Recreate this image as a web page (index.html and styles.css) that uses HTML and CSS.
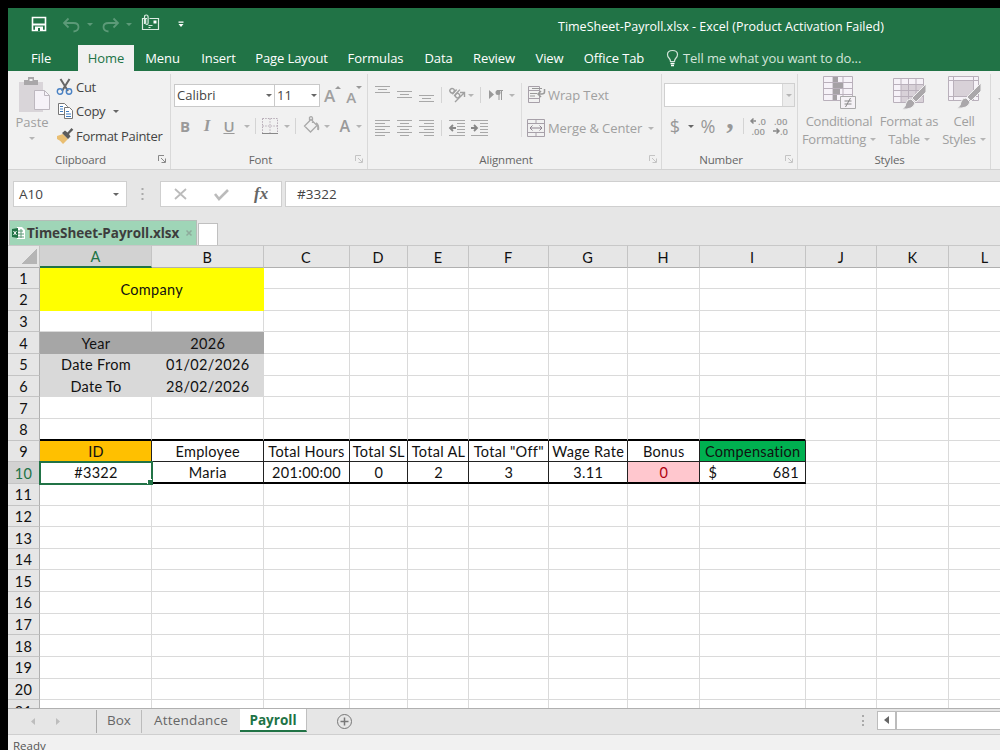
FILE: index.html
```html
<!DOCTYPE html>
<html lang="en">
<head>
<meta charset="utf-8">
<title>TimeSheet-Payroll.xlsx - Excel</title>
<link rel="stylesheet" href="styles.css">
</head>
<body>
<div class="window">
  <header class="titlebar">
    <div class="quick">
      <svg width="190" height="36" fill="none">
        <path d="M24.500 9.500h13v13h-13z" stroke="#fff" stroke-width="1.600"/><path d="M24 16.500h14" stroke="#fff" stroke-width="2"/><path d="M27 18.500h8v4h-8z" fill="#fff"/><path d="M30 20h2v3h-2z" fill="#217346"/>
        <g stroke="#5c9a78" stroke-width="1.800"><path d="M60.500 10.500l-4.500 4.500 4.500 4.500M56.500 15h9q5 0 5 4t-5 4.500"/><path d="M105.500 10.500l4.500 4.500-4.500 4.500M109.500 15h-9q-5 0-5 4t5 4.500"/></g>
        <path d="M79 15h6l-3 3zM118 15h6l-3 3z" fill="#5c9a78"/>
        <g stroke="#dcebe2" stroke-width="1.200"><path d="M139 10.500h-4.500v11h16v-11h-9"/><path d="M136.500 16v-7q0-2 1.800-2t1.800 2v6q0 1.500-1.200 1.500t-1.200-1.500v-5"/><path d="M140.500 17.500h4M140.500 19.500h2"/></g><path d="M145.500 12.500h3v3h-3z" fill="#fff"/>
        <path d="M170.500 13.500h5v1.200h-5zM170.500 16h5l-2.500 3z" fill="#fff"/>
      </svg>
    </div>
    <div class="title">TimeSheet-Payroll.xlsx - Excel (Product Activation Failed)</div>
  </header>
  <nav class="menu">
    <span class="file">File</span><span class="active">Home</span><span>Menu</span><span>Insert</span><span>Page Layout</span><span>Formulas</span><span>Data</span><span>Review</span><span>View</span><span>Office Tab</span>
    <svg width="30" height="26" fill="none" stroke="#d3e5da" stroke-width="1.200"><path d="M16.500 16.500q0-2-1.500-3.500t-1.500-3.500q0-4 5-4t5 4q0 2-1.500 3.500t-1.500 3.500z"/><path d="M16.500 18.500h4M17 20.500h3" stroke="#fff" stroke-width="1.600"/></svg>
    <span class="tell">Tell me what you want to do...</span>
  </nav>

  <section class="ribbon">
    <div class="group clipboard">
      <div class="body">
        <div class="paste">
          <svg width="34" height="38" fill="none"><path d="M4 8h24v30H4z" fill="#d9d5d9"/><path d="M9 6h4V3h6v3h4v5H9z" fill="#a9a7a9"/><path d="M14.500 5h3v2h-3z" fill="#f0f0f0"/><path d="M19.500 16.500h10l5 5v14h-15z" fill="#f6f2f8" stroke="#bdb7bf"/><path d="M29.500 16.500v5h5" stroke="#bdb7bf"/></svg>
          <span class="off">Paste</span><i class="caret"></i>
        </div>
        <div class="clips">
          <div><svg width="20" height="20" fill="none"><path d="M4.500 2l7.500 12M13.500 2L6 14" stroke="#666" stroke-width="2"/><circle cx="4" cy="14.500" r="2.700" stroke="#4a82c4" stroke-width="1.400"/><circle cx="13" cy="14.500" r="2.700" stroke="#4a82c4" stroke-width="1.400"/></svg>Cut</div>
          <div><svg width="20" height="20" fill="none"><g fill="#fff" stroke="#777"><path d="M2.500 2.500h6l3 3v8h-9z"/><path d="M8.500 6.500h5l3 3v8h-8z"/></g><path d="M4 5.500h3M4 8h3M4 10.500h3M10 10.500h3M10 13h5M10 15.500h5" stroke="#3c7abf"/></svg>Copy<i class="caret dark"></i></div>
          <div><svg width="20" height="20"><path d="M1 10l6-2 5 5-5 5q-3-4-6-5z" fill="#e9be72"/><path d="M6 7l3-2.500 2.500 2L15.500 2l1.800 1.800L13 8l1.500 2.500-2.500 2.500z" fill="#5c5c5c"/></svg>Format Painter</div>
        </div>
      </div>
      <footer><span>Clipboard</span><svg class="launch dark" width="8" height="8"><path d="M.5 6V.5H6M3 3l4 4M7.500 3.500v4h-4"/></svg></footer>
    </div>

    <div class="group font">
      <div class="body col">
        <div class="tools upper">
          <div class="combo name">Calibri<i class="caret dark"></i></div><div class="combo size">11<i class="caret dark"></i></div>
          <span class="grow">A</span><svg width="8" height="20"><path d="M0 4l3-3 3 3z" fill="#999"/></svg><span class="grow small">A</span><svg width="8" height="20"><path d="M0 1h6l-3 3z" fill="#999"/></svg>
        </div>
        <div class="tools lower">
          <b class="t22">B</b><em class="t22">I</em><u class="t22">U</u><i class="caret c10"></i><i class="sep"></i>
          <svg width="23" height="24" fill="none" stroke="#b6abb6"><path d="M3.500 4.500h15v15M3.500 4.500v15M11 4.500v15M3.500 12h15" stroke-dasharray="1.500 1.200"/><path d="M3 19.500h16" stroke="#888"/></svg><i class="caret c10"></i><i class="sep"></i>
          <svg width="23" height="24" fill="none" stroke="#aaa" stroke-width="1.300"><path d="M12 5.500l6 6-6.500 6.500-6-6zM10.500 8V3.500q2-2 3 .5v5"/><path d="M17 9q3 2 2 7" stroke-width="2"/></svg><i class="caret c10"></i><span class="acolor">A</span><i class="caret c10"></i>
        </div>
      </div>
      <footer><span>Font</span><svg class="launch" width="8" height="8"><path d="M.5 6V.5H6M3 3l4 4M7.500 3.500v4h-4"/></svg></footer>
    </div>

    <div class="group align">
      <div class="body">
        <div class="aligns">
          <div class="tools">
            <svg width="70" height="24" fill="none" stroke="#a8a8a8"><path d="M7 3.500h15M10 6.500h9M7 9.500h15M29 8.500h15M32 11.500h9M29 14.500h15M51 12.500h15M54 15.500h9M51 18.500h15"/></svg><i class="sep"></i>
            <svg width="23" height="24" fill="none" stroke="#a0a0a0" stroke-width="1.400"><g transform="rotate(42 10 9)"><circle cx="7" cy="10" r="2.200"/><path d="M9.500 6v6.500"/><path d="M12 4v8.500"/><circle cx="14.300" cy="10" r="2.200"/></g><path d="M10 19l9-9M15 9.500h4.500V14"/></svg><i class="caret"></i><i class="sep wide"></i>
            <svg width="23" height="24"><path d="M5 7l5 4.500-5 4.500z" fill="#999"/><path d="M15 7v10M17.500 7v10M13 7.500h6" stroke="#999" fill="none"/><circle cx="14" cy="9.500" r="2.500" fill="#999"/></svg><i class="caret c10"></i>
          </div>
          <div class="tools second">
            <svg width="70" height="24" fill="none" stroke="#a8a8a8"><path d="M7 4.500h15M7 7.500h10M7 10.500h15M7 13.500h10M7 16.500h15M7 19.500h10M29 4.500h15M32 7.500h9M29 10.500h15M32 13.500h9M29 16.500h15M32 19.500h9M51 4.500h15M56 7.500h10M51 10.500h15M56 13.500h10M51 16.500h15M56 19.500h10"/></svg><i class="sep"></i>
            <svg width="46" height="24" fill="none" stroke="#a8a8a8"><path d="M4 4.500h16M12 7.500h8M12 10.500h8M12 13.500h8M12 16.500h8M4 19.500h16M26 4.500h17M35 7.500h8M35 10.500h8M35 13.500h8M35 16.500h8M26 19.500h17"/><path d="M11 12H5m3-3l-3 3 3 3M26 12h6m-3-3l3 3-3 3" stroke="#888" stroke-width="1.800"/></svg>
          </div>
        </div>
        <div class="wraps">
          <div class="off"><svg width="21" height="22" fill="none" stroke="#a7a0a9"><path d="M1.500 2.500h11v16h-11zM1.500 6.500h11M1.500 14.500h11"/><path d="M3 9.500h7M3 12h5M5 4.500h10" stroke="#999"/><path d="M17.500 5v3q0 2-3 2h-3m2.500-3l-3 3 3 3" stroke="#999" stroke-width="1.500"/></svg>Wrap Text</div>
          <div class="off"><svg width="21" height="22" fill="none" stroke="#a7a0a9"><path d="M.5 2.500h17v17H.5zM.5 6.500h17M.5 15.500h17M9 2.500v4M9 15.500v4"/><path d="M3 11h12M5.500 8.500L3 11l2.500 2.500M12.500 8.500L15 11l-2.500 2.500" stroke="#8e8490"/></svg><span class="merge">Merge &amp; Center</span><i class="caret"></i></div>
        </div>
      </div>
      <footer><span>Alignment</span><svg class="launch" width="8" height="8"><path d="M.5 6V.5H6M3 3l4 4M7.500 3.500v4h-4"/></svg></footer>
    </div>

    <div class="group number">
      <div class="body col">
        <div class="format"><span><i class="caret"></i></span></div>
        <div class="tools">
          <span class="sym w24">$</span><i class="caret c10 dark"></i><span class="sym pct">%</span><span class="comma">,</span><i class="sep"></i>
          <svg width="47" height="24" class="dec"><path d="M9 7H4m2.500-2.500L4 7l2.500 2.500M26 17h6m-2.500-2.500L32 17l-2.500 2.500" fill="none" stroke="#888" stroke-width="1.500"/><text x="11" y="10.500">.0</text><text x="4.500" y="20.500">.00</text><text x="27" y="10.500">.00</text><text x="33" y="20.500">.0</text></svg>
        </div>
      </div>
      <footer><span>Number</span><svg class="launch" width="8" height="8"><path d="M.5 6V.5H6M3 3l4 4M7.500 3.500v4h-4"/></svg></footer>
    </div>

    <div class="group styles">
      <div class="body">
        <div class="style off"><svg width="34" height="37" fill="none" stroke="#b9b0bb"><path d="M1.500 2.500h29v24h-29z" fill="#f6f2f8"/><path d="M1.500 8.500h29M1.500 14.500h29M1.500 20.500h29M11 2.500v24M21 2.500v24"/><path d="M11 3h5v5h-5zM11 9h10v5H11zM11 15h7v5h-7zM11 21h4v5h-4z" fill="#a5a1a5" stroke="none"/><path d="M18.500 22.500h15v12h-15z" fill="#f5f2f6" stroke="#aaa"/><path d="M22.500 27h7M22.500 30h7M28.500 24l-5 9" stroke="#888"/></svg><span>Conditional</span><span>Formatting<i class="caret"></i></span></div>
        <div class="style off"><svg width="34" height="37" fill="none" stroke="#b9b0bb"><path d="M1.500 4.500h30v24h-30z" fill="#f6f2f8"/><path d="M9 11h22v17H9z" fill="#d8d1d8" stroke="none"/><path d="M1.500 10.500h30M1.500 16.500h30M1.500 22.500h30M9 4.500v24M16.500 4.500v24M24 4.500v24"/><path d="M34 10v8l-10 10-4-4zM19 25l4 4q-2 7-13 6 4-2 4-6 1-4 5-4z" fill="#aaa7aa" stroke="#f0f0f0"/></svg><span>Format as</span><span>Table<i class="caret"></i></span></div>
        <div class="style off"><svg width="34" height="37" fill="none" stroke="#b9b0bb"><path d="M1.500 2.500h30v24h-30z" fill="#f6f2f8"/><path d="M7 7h19v15H7z" fill="#d8d1d8" stroke="none"/><path d="M1.500 6.500h30M1.500 22.500h30M6.500 2.500v24M26.500 2.500v24"/><path d="M34 9v8L24 27l-4-4zM19 24l4 4q-2 7-13 6 4-2 4-6 1-4 5-4z" fill="#aaa7aa" stroke="#f0f0f0"/></svg><span>Cell</span><span>Styles<i class="caret"></i></span></div>
      </div>
      <footer><span>Styles</span></footer>
    </div>
    <div class="more"><i class="caret"></i></div>
  </section>

  <section class="formula">
    <div class="namebox">A10<i class="caret dark"></i></div>
    <svg width="34" height="26" fill="#aaa"><path d="M14.500 7h2v2h-2zM14.500 12h2v2h-2zM14.500 17h2v2h-2z"/></svg>
    <div class="actions"><svg width="80" height="24" fill="none" stroke="#bbb"><path d="M14 7l11 10M25 7L14 17" stroke-width="1.800"/><path d="M54 12l4 5 9-9" stroke-width="2.600"/></svg><span>fx</span></div>
    <div class="input">#3322</div>
  </section>

  <section class="files">
    <div class="filetab"><svg width="17" height="16"><path d="M7 2h5l3 3v9H7z" fill="#fff"/><path d="M8 6h5M8 9h6M8 12h6M11 4v9" stroke="#5c9a78" fill="none"/><path d="M2 4l6-1v10l-6-1z" fill="#217346"/><path d="M3.500 6l3 4M6.500 6l-3 4" stroke="#fff"/></svg><b>TimeSheet-Payroll.xlsx</b><svg width="8" height="8" stroke="#8eaa9b" stroke-width="1.500"><path d="M1.500 1.500l5 5M6.500 1.500l-5 5"/></svg></div>
    <div class="newfile"></div>
  </section>

  <main class="sheet" id="sheet"></main>

  <section class="tabs">
    <svg width="88" height="26" fill="#bdbdbd"><path d="M27 9v7l-4-3.500zM48 9v7l4-3.500z"/></svg>
    <span class="box">Box</span><span class="att">Attendance</span><span class="pay">Payroll</span>
    <svg class="add" width="18" height="18" fill="none" stroke="#777"><circle cx="8.500" cy="8.500" r="7"/><path d="M4.500 8.500h8M8.500 4.500v8" stroke-width="1.500"/></svg>
    <svg class="grip" width="6" height="18" fill="#aaa"><path d="M2 3h2v2H2zM2 8h2v2H2zM2 12h2v2H2z"/></svg>
    <div class="scroll"><span></span></div>
  </section>
  <footer class="status">Ready</footer>
</div>
<script src="script.js"></script>
</body>
</html>
```
FILE: script.js
```js
const cells = {
  A1: ["Company", "company"],
  A4: ["Year", "dark"], B4: ["2026", "dark"],
  A5: ["Date From", "light"], B5: ["01/02/2026", "light"],
  A6: ["Date To", "light"], B6: ["28/02/2026", "light"],
  A9: ["ID", "orange"], B9: ["Employee"], C9: ["Total Hours"], D9: ["Total SL"], E9: ["Total AL"],
  F9: ['Total "Off"'], G9: ["Wage Rate"], H9: ["Bonus"], I9: ["Compensation", "green"],
  A10: ["#3322", "selected"], B10: ["Maria"], C10: ["201:00:00"], D10: ["0"], E10: ["2"],
  F10: ["3"], G10: ["3.11"], H10: ["0", "bad"], I10: ["$", "money"]
};
const columns = "ABCDEFGHIJKL";
const sheet = document.getElementById("sheet");

function add(className, text) {
  const el = document.createElement("div");
  el.className = className;
  const label = document.createElement("span");
  label.textContent = text;
  el.append(label);
  sheet.append(el);
  return el;
}

add("head corner", "");
for (const c of columns) add("head" + (c === "A" ? " current" : ""), c);
for (let r = 1; r <= 21; r++) {
  add("row" + (r === 10 ? " current" : ""), r);
  for (const c of columns) {
    if ((c === "B" && r === 1) || (c < "C" && r === 2)) continue;
    const [text, kind] = cells[c + r] || [""];
    let cls = "cell";
    if (kind) cls += " " + kind;
    if ((r === 9 || r === 10) && c < "J") cls += r === 9 ? " th" : " td";
    if (r === 8 && c < "J") cls += " above";
    const el = add(cls, text);
    if (kind === "money") {
      const amount = document.createElement("span");
      amount.textContent = "681";
      el.append(amount);
    }
  }
}
```
FILE: styles.css
```css
* { box-sizing: border-box; }
body { margin: 0; background: #000; height: 750px; overflow: hidden; padding: 8px 0 0 8px; font: 13px "Open Sans", "Noto Sans", sans-serif; color: #444; }
svg { display: block; flex: none; overflow: visible; }
.window { width: 992px; height: 742px; background: #e6e6e6; display: flex; flex-direction: column; overflow: hidden; }
.window > * { flex: none; }

.titlebar { height: 37px; background: #217346; display: flex; color: #fff; }
.title { margin-left: 360px; line-height: 37px; font-size: 12.5px; white-space: nowrap; }
.menu { height: 26px; background: #217346; color: #fff; display: grid; grid-template-columns: 70px 56px 57px 55px 91px 77px 49px 62px 49px 80px 29px 1fr; line-height: 26px; text-align: center; letter-spacing: -.1px; white-space: nowrap; }
.menu .file { padding-right: 4px; }
.menu .active { background: #f1f1f1; color: #217346; }
.menu .tell { text-align: left; color: #d3e5da; }

.caret { width: 0; height: 0; border: 3px solid transparent; border-top-color: #b5b5b5; border-bottom: 0; flex: none; display: inline-block; }
.caret.dark { border-top-color: #666; }
.c10 { margin: 0 2px; }
.off { color: #a0a0a0; }
.sep { width: 1px; height: 16px; background: #d4d4d4; margin: 0 3px; flex: none; }
.tools { display: flex; align-items: center; height: 24px; }

.ribbon { height: 99px; background: #f1f1f1; border-bottom: 1px solid #d2d2d2; display: flex; overflow: hidden; }
.group { flex: none; height: 95px; margin-top: 3px; border-right: 1px solid #d9d9d9; display: flex; flex-direction: column; }
.group .body { height: 76px; display: flex; }
.group .body.col { flex-direction: column; }
.group footer { height: 18px; line-height: 17px; font-size: 11.5px; letter-spacing: -.15px; color: #666; text-align: center; display: flex; align-items: center; padding-right: 4px; }
.group footer span { flex: 1; padding-right: 5px; }
.launch { fill: none; stroke: #c4c4c4; }
.launch.dark { stroke: #888; }
.clipboard { width: 163px; }
.font { width: 197px; }
.align { width: 294px; }
.number { width: 136px; }
.styles { width: 193px; }
.more { padding: 16px 0 0 7px; }

.paste { width: 48px; display: flex; flex-direction: column; align-items: center; padding-top: 0; }
.paste span { line-height: 20px; }
.paste .caret { margin-top: 5px; }
.clips { display: grid; grid-template-rows: 25px 24px 25px; }
.clips div { display: flex; align-items: center; letter-spacing: -.3px; white-space: nowrap; }
.clips .caret { margin-left: 8px; }

.font .body { padding: 9px 0 0 3px; }
.combo { height: 23px; border: 1px solid #c9c9c9; background: #fff; display: flex; align-items: center; justify-content: space-between; padding: 0 2px 0 2px; }
.combo.name { width: 101px; }
.combo.size { width: 46px; margin-left: -1px; }
.grow { font-weight: 600; font-size: 17px; color: #a0a0a0; margin-left: 4px; }
.grow.small { font-size: 15px; margin-left: 3px; padding-top: 3px; }
.lower { margin-top: 7px; color: #9a9a9a; font-size: 15px; }
.t22 { width: 22px; text-align: center; }
.lower em { font-family: "Liberation Serif", serif; font-weight: bold; font-size: 17px; }
.lower u { font-weight: 600; margin-right: 2px; }
.acolor { width: 18px; text-align: right; font-weight: 600; font-size: 16px; margin-right: 4px; }

.aligns { width: 153px; height: 60px; padding-top: 9px; }
.aligns .second { margin-top: 9px; }
.sep.wide { margin-left: 6px; }
.wraps { border-left: 1px solid #dcdcdc; height: 54px; margin-top: 9px; padding-left: 5px; }
.wraps div { display: flex; align-items: center; height: 24px; white-space: nowrap; letter-spacing: -.1px; }
.wraps div + div { margin-top: 9px; }
.wraps .caret { margin-left: 6px; }

.number .body { padding: 9px 0 0 2px; }
.format { width: 131px; height: 24px; background: #fff; border: 1px solid #d0d0d0; display: flex; justify-content: flex-end; }
.format span { width: 12px; background: #ececec; border-left: 1px solid #d8d8d8; display: flex; align-items: center; justify-content: center; }
.number .tools { margin-top: 7px; color: #989898; }
.sym { font-size: 18px; text-align: center; }
.w24 { width: 22px; }
.pct { width: 24px; }
.comma { width: 20px; text-align: center; font: bold 30px/10px "Liberation Serif", serif; padding-bottom: 16px; }
.dec { font: 600 9.5px "Open Sans", sans-serif; fill: #999; }

.style { display: flex; flex-direction: column; align-items: center; white-space: nowrap; line-height: 18px; letter-spacing: -.25px; }
.style span:nth-of-type(1) { margin-top: 1px; }
.style .caret { margin: 0 0 3px 4px; }
.styles .body { display: grid; grid-template-columns: 82px 58px 52px; }

.formula { height: 49px; padding-top: 11px; display: flex; align-items: flex-start; padding-left: 5px; font-size: 13.5px; }
.namebox, .actions, .input { height: 26px; background: #fff; border: 1px solid #cfcfcf; display: flex; align-items: center; }
.namebox { width: 114px; justify-content: space-between; padding: 0 7px 0 5px; }
.actions { width: 122px; margin-left: -1px; }
.actions span { font: italic bold 17px "Liberation Serif", serif; margin-left: 13px; color: #666; }
.input { flex: 1; margin-left: 3px; padding-left: 11px; border-right: 0; }

.files { height: 26px; display: flex; align-items: flex-end; padding-left: 1px; }
.filetab { width: 188px; height: 25px; background: #9fd5b7; border: 1px solid #b5bdb8; border-bottom: 0; display: flex; align-items: center; white-space: nowrap; }
.filetab b { width: 158px; font-size: 13.5px; font-weight: 700; letter-spacing: -.03px; color: #3d3d3d; }
.newfile { width: 20px; height: 22px; background: #fff; border: 1px solid #c0c0c0; border-bottom: 0; margin-left: 1px; }

.sheet { height: 463px; overflow: hidden; background: #fff; display: grid; grid-template-columns: 32px 112px 111.500px 86px 58.500px 61px 79.500px 79.500px 71.500px 106.500px 71px 72px 72px; grid-template-rows: 22.500px; grid-auto-rows: 21.650px; font-family: Lato, sans-serif; font-size: 14.500px; letter-spacing: .3px; color: #111; white-space: nowrap; }
.head, .row { background: #e6e6e6; border-right: 1px solid #c4c4c4; border-bottom: 1px solid #c4c4c4; display: flex; align-items: center; justify-content: center; }
.head { border-top: 1px solid #c8c8c8; border-bottom-color: #b0b0b0; padding-top: 2px; }
.row { border-right-color: #b0b0b0; padding-top: 1px; }
.head.current { background: #d2d2d2; color: #217346; border-bottom: 2px solid #217346; }
.row.current { background: #d2d2d2; color: #217346; }
.corner { background: linear-gradient(135deg, transparent 50%, #b5b5b5 50%) no-repeat 14px 3px / 15px 15px, #e6e6e6; }
.cell { border-right: 1px solid #dadada; border-bottom: 1px solid #dadada; display: flex; align-items: center; justify-content: center; position: relative; min-width: 0; padding: 1px 0 0 1px; }
.company { grid-area: 2 / 2 / 4 / 4; background: #ff0; border-color: #ff0; }
.dark.cell { background: #a6a6a6; border-color: #a6a6a6; }
.light { background: #d9d9d9; border-color: #d9d9d9; }
.above { border-bottom: 2px solid #000; }
.th { border-right: 1px solid #222; border-bottom-color: #222; }
.td { border-right: 1px solid #222; border-bottom: 2px solid #000; }
.orange { background: #ffc000; }
.green { background: #00b050; }
.bad { background: #ffc7ce; color: #b00010; }
.money { justify-content: space-between; padding: 1px 6px 0 9px; }
.selected { outline: 2px solid #217346; outline-offset: -1px; z-index: 1; border-color: transparent; }
.selected::after { content: ""; position: absolute; right: -2px; bottom: -3px; width: 5px; height: 5px; background: #217346; box-shadow: -1px -1px #fff; }

.tabs { height: 27px; border-top: 1px solid #b0b0b0; border-bottom: 1px solid #cfcfcf; display: flex; align-items: flex-start; font-size: 13.5px; color: #666; line-height: 22px; text-align: center; }
.tabs span { height: 23px; }
.box { width: 46px; border-left: 1px solid #aaa; border-right: 1px solid #bbb; margin-top: 1px; line-height: 20px; }
.att { width: 98px; letter-spacing: .2px; }
.pay { width: 67px; background: #fff; border-bottom: 2px solid #217346; border-right: 1px solid #c0c0c0; color: #217346; font-weight: 700; }
.add { margin: 4px 0 0 29px; }
.grip { margin: 3px 0 0 506px; }
.scroll { margin: 2px 0 0 11px; flex: 1; height: 19px; background: #fff; border: 1px solid #bcbcbc; border-right: 0; }
.tabs .scroll span { display: block; width: 19px; height: 17px; border-right: 2px solid #bcbcbc; padding: 4px 0 0 6px; }
.scroll span::before { content: ""; display: block; width: 0; border: 4px solid transparent; border-right: 5px solid #666; border-left: 0; }
.status { flex: 1; background: #f1f1f1; font-size: 11.500px; line-height: 21px; padding-left: 5px; color: #555; }
```
